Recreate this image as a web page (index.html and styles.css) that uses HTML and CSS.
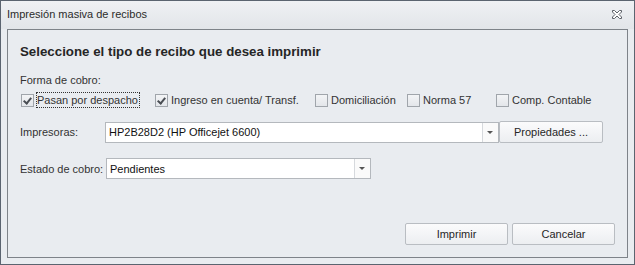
FILE: index.html
```html
<!DOCTYPE html>
<html>
<head>
	<meta charset="utf-8">
	<title>Impresión masiva de recibos</title>
	<link rel="stylesheet" href="styles.css">
</head>
<body>
	<div class="window">
		<div class="titlebar">
			<span class="title">Impresión masiva de recibos</span>
			<svg class="close" width="10" height="9" viewBox="0 0 10 9">
				<path d="M0.5 0.5h2l2.5 2.5 2.5-2.5h2v1.5l-2.5 2.5 2.5 2.5v1.5h-2l-2.5-2.5-2.5 2.5h-2v-1.5l2.5-2.5-2.5-2.5z" fill="#fff" stroke="#5c6168" stroke-width="1"/>
			</svg>
		</div>
		<div class="panel">
			<h1>Seleccione el tipo de recibo que desea imprimir</h1>
			<div class="label">Forma de cobro:</div>
			<div class="checks">
				<label class="check c1"><span class="box on"></span><span class="focus">Pasan por despacho</span></label>
				<label class="check c2"><span class="box on"></span><span>Ingreso en cuenta/ Transf.</span></label>
				<label class="check c3"><span class="box"></span><span>Domiciliación</span></label>
				<label class="check c4"><span class="box"></span><span>Norma 57</span></label>
				<label class="check"><span class="box"></span><span>Comp. Contable</span></label>
			</div>
			<div class="row printers">
				<span class="field-label">Impresoras:</span>
				<div class="combo wide">
					<span class="value">HP2B28D2 (HP Officejet 6600)</span>
					<span class="arrow"></span>
				</div>
				<button class="btn props">Propiedades ...</button>
			</div>
			<div class="row status">
				<span class="field-label">Estado de cobro:</span>
				<div class="combo narrow">
					<span class="value">Pendientes</span>
					<span class="arrow"></span>
				</div>
			</div>
			<div class="actions">
				<button class="btn action">Imprimir</button>
				<button class="btn action">Cancelar</button>
			</div>
		</div>
	</div>
</body>
</html>
```

FILE: styles.css
```css
body {
  margin: 0;
  font-family: "Liberation Sans", Arial, sans-serif;
  font-size: 11px;
  color: #1e1e1e;
}

.window {
  width: 635px;
  height: 265px;
  box-sizing: border-box;
  border: 1px solid #5b6470;
  background-color: #e9ecf0;
  display: flex;
  flex-direction: column;
}

.titlebar {
  height: 28px;
  display: flex;
  align-items: center;
  justify-content: space-between;
  padding: 0 12px 0 6px;
  background: linear-gradient(#eff1f4, #e2e5e9);
}

.title {
  color: #2b2b2b;
  margin-top: -2px;
}

.close {
  margin-top: -2px;
}

.panel {
  flex: 1;
  margin: 0 6px 6px 6px;
  border: 1px solid #7e8389;
  padding: 0 0 0 12px;
  display: flex;
  flex-direction: column;
}

h1 {
  margin: 13px 0 0 0;
  font-size: 13.3px;
  font-weight: bold;
  color: #262626;
  line-height: 18px;
}

.label {
  margin-top: 11px;
  line-height: 16px;
  color: #333;
}

.checks {
  display: flex;
  align-items: center;
  margin-top: 3px;
  height: 18px;
}

.check {
  display: flex;
  align-items: center;
  flex-shrink: 0;
  white-space: nowrap;
  color: #333;
}

.c1 { width: 134px; }
.c2 { width: 160px; }
.c3 { width: 92px; }
.c4 { width: 89px; }

.box {
  width: 11px;
  height: 11px;
  flex-shrink: 0;
  border: 1px solid #a0a5ab;
  background: linear-gradient(#f3f4f6, #e3e6ea);
  margin: 0 3px 0 1px;
  position: relative;
}

.box.on::after {
  content: "";
  position: absolute;
  left: 3px;
  top: 1px;
  width: 3px;
  height: 6px;
  border: solid #4a4e54;
  border-width: 0 2px 2px 0;
  transform: rotate(40deg);
}

.focus {
  outline: 1px dotted #333;
  padding: 1px 1px 1px 0;
}

.row {
  display: flex;
  align-items: center;
}

.printers {
  margin-top: 12px;
}

.status {
  margin-top: 15px;
}

.field-label {
  flex-shrink: 0;
  white-space: nowrap;
  color: #333;
}

.printers .field-label {
  width: 85px;
}

.status .field-label {
  width: 86px;
}

.combo {
  height: 19px;
  flex-shrink: 0;
  border: 1px solid #b4b8bd;
  background-color: #fff;
  display: flex;
  align-items: center;
}

.wide {
  width: 392px;
}

.narrow {
  width: 263px;
}

.value {
  flex: 1;
  padding-left: 3px;
  color: #111;
}

.arrow {
  width: 15px;
  height: 19px;
  border-left: 1px solid #d6d9dd;
  background-color: #fafafa;
  position: relative;
}

.arrow::after {
  content: "";
  position: absolute;
  left: 4px;
  top: 8px;
  border-left: 3px solid transparent;
  border-right: 3px solid transparent;
  border-top: 3px solid #555;
}

.btn {
  font-family: "Liberation Sans", Arial, sans-serif;
  font-size: 11px;
  color: #262626;
  border: 1px solid #b9bdc2;
  border-radius: 2px;
  background: linear-gradient(#fbfbfc, #eceef1);
  padding: 0;
}

.props {
  width: 104px;
  height: 22px;
  flex-shrink: 0;
}

.actions {
  display: flex;
  justify-content: flex-end;
  gap: 4px;
  margin-top: auto;
  margin-bottom: 12px;
  padding-right: 12px;
}

.action {
  width: 103px;
  height: 22px;
}
```
